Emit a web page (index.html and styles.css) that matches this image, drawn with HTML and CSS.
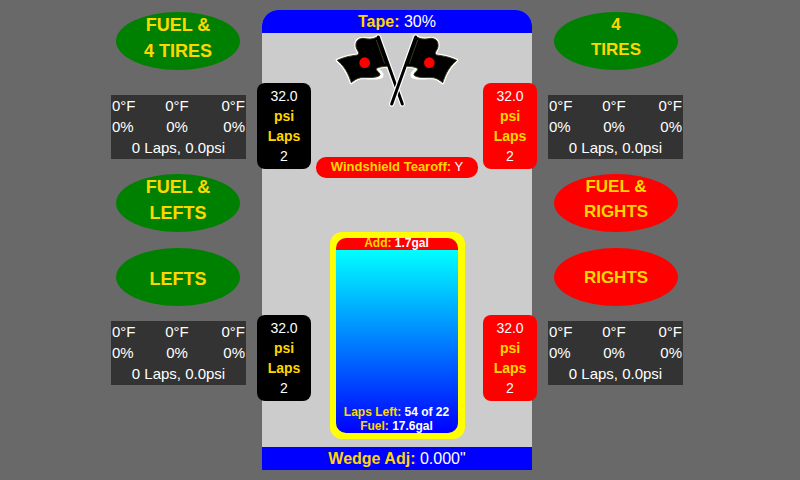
FILE: index.html
```html
<!DOCTYPE html>
<html lang="en">
<head>
<meta charset="utf-8">
<title>Pit Stop</title>
<link rel="stylesheet" href="styles.css">
</head>
<body>
<main class="dash">
  <section class="side left">
    <button class="preset on" type="button"><span>FUEL &amp;</span><span>4 TIRES</span></button>
    <table class="wear">
      <tr><td>0°F</td><td>0°F</td><td>0°F</td></tr>
      <tr><td>0%</td><td>0%</td><td>0%</td></tr>
      <tr><td colspan="3">0 Laps, 0.0psi</td></tr>
    </table>
    <button class="preset on" type="button"><span>FUEL &amp;</span><span>LEFTS</span></button>
    <button class="preset single on" type="button"><span>LEFTS</span></button>
    <table class="wear">
      <tr><td>0°F</td><td>0°F</td><td>0°F</td></tr>
      <tr><td>0%</td><td>0%</td><td>0%</td></tr>
      <tr><td colspan="3">0 Laps, 0.0psi</td></tr>
    </table>
  </section>

  <section class="car">
    <button class="bar front" type="button"><b>Tape:</b> 30%</button>
    <div class="body">
      <div class="tires">
        <button class="tire" type="button"><span>32.0</span><b>psi</b><b>Laps</b><span>2</span></button>
        <button class="tire" type="button"><span>32.0</span><b>psi</b><b>Laps</b><span>2</span></button>
      </div>
      <div class="middle">
        <svg class="flags" viewBox="0 15 402 240" aria-hidden="true">
          <defs>
            <path id="cloth" d="M22 97 C38 89 58 84 82 81 C92 75 80 68 78 56 C76 38 86 31 101 31 C118 35 132 34 144 25 L174 114 C160 116 148 116 140 121 C134 127 151 133 150 141 C142 151 112 148 92 149 C80 151 71 158 64 164 C58 147 50 121 22 97 Z"/>
          </defs>
          <g id="flag">
            <use href="#cloth" class="halo"/>
            <path d="M137 122 C148 128 160 138 154 146 C148 152 130 150 110 149" class="halo"/>
            <path d="M145 27 L217 228" class="pole-halo"/>
            <use href="#cloth" class="cloth"/>
            <path d="M145 27 L217 228" class="pole"/>
            <path d="M139 36 L164 107" class="seam"/>
            <circle cx="104" cy="104" r="16" class="dot"/>
          </g>
          <use href="#flag" transform="matrix(-1 0 0 1 402 0)"/>
        </svg>
        <button class="tearoff" type="button"><b>Windshield Tearoff:</b> Y</button>
        <button class="fuel" type="button">
          <span class="tank">
            <span class="add"><b>Add:</b> 1.7gal</span>
            <span class="level">
              <span><b>Laps Left:</b> 54 of 22</span>
              <span><b>Fuel:</b> 17.6gal</span>
            </span>
          </span>
        </button>
      </div>
      <div class="tires">
        <button class="tire off" type="button"><span>32.0</span><b>psi</b><b>Laps</b><span>2</span></button>
        <button class="tire off" type="button"><span>32.0</span><b>psi</b><b>Laps</b><span>2</span></button>
      </div>
    </div>
    <button class="bar" type="button"><b>Wedge Adj:</b> 0.000"</button>
  </section>

  <section class="side right">
    <button class="preset on" type="button"><span>4</span><span>TIRES</span></button>
    <table class="wear">
      <tr><td>0°F</td><td>0°F</td><td>0°F</td></tr>
      <tr><td>0%</td><td>0%</td><td>0%</td></tr>
      <tr><td colspan="3">0 Laps, 0.0psi</td></tr>
    </table>
    <button class="preset" type="button"><span>FUEL &amp;</span><span>RIGHTS</span></button>
    <button class="preset single" type="button"><span>RIGHTS</span></button>
    <table class="wear">
      <tr><td>0°F</td><td>0°F</td><td>0°F</td></tr>
      <tr><td>0%</td><td>0%</td><td>0%</td></tr>
      <tr><td colspan="3">0 Laps, 0.0psi</td></tr>
    </table>
  </section>
</main>
</body>
</html>
```
FILE: styles.css
```css
* { box-sizing: border-box; }

body {
  margin: 0;
  background: #696969;
  color: #fff;
  font-family: "Liberation Sans", Arial, sans-serif;
}

button {
  margin: 0;
  padding: 0;
  border: 0;
  background: none;
  color: inherit;
  font: inherit;
  cursor: pointer;
}

b { color: gold; }

.dash {
  display: flex;
  justify-content: center;
  align-items: flex-start;
  gap: 16px;
  padding: 10px 6px 10px 0;
}

.side {
  display: flex;
  flex-direction: column;
  width: 135px;
  padding-top: 2px;
}

/* Pit stop presets */
.preset {
  display: flex;
  flex-direction: column;
  align-items: center;
  justify-content: flex-start;
  width: 124px;
  height: 58px;
  margin-left: 5px;
  border-radius: 50%;
  background: red;
  color: gold;
  font-weight: bold;
  font-size: 18px;
  line-height: 26px;
}

.right .preset {
  margin-left: 6px;
  font-size: 17px;
  line-height: 25px;
}

.preset.on { background: green; }

.single {
  margin-top: 16px;
  padding-top: 18px;
}

.right .single { padding-top: 17px; }

/* Tire wear tables */
.wear {
  width: 100%;
  margin: 15px 0;
  border-collapse: collapse;
  table-layout: fixed;
  background: #333;
  font-size: 15px;
  line-height: 21px;
}

.preset:first-child + .wear { margin-top: 25px; }

.wear td {
  padding: 0 1px;
  text-align: center;
}

.wear tr:last-child td { padding-bottom: 1px; }
.wear td:first-child:not([colspan]) { width: 43px; text-align: left; }
.wear td:last-child:not([colspan]) { text-align: right; }

/* Car */
.car {
  display: flex;
  flex-direction: column;
  width: 270px;
  border-radius: 16px 16px 0 0;
  background: #ccc;
}

.bar {
  height: 23px;
  background: blue;
  font-size: 16px;
  line-height: 23px;
}

.front { border-radius: 16px 16px 0 0; }

.body {
  display: flex;
  justify-content: space-between;
  margin: 0 -5px;
}

.tires {
  display: flex;
  flex-direction: column;
  gap: 146px;
  padding-top: 50px;
}

.tire {
  display: flex;
  flex-direction: column;
  align-items: center;
  width: 54px;
  padding: 3px 0;
  border-radius: 8px;
  background: #000;
  font-size: 14px;
  line-height: 20px;
}

.tire.off { background: red; }

.middle {
  display: flex;
  flex: 1;
  flex-direction: column;
  align-items: center;
}

.flags {
  width: 134px;
  height: 80px;
}

.halo { fill: #fff; stroke: #fff; stroke-width: 10; stroke-linejoin: round; }
.cloth { fill: #000; stroke: #3c3c1c; stroke-width: 3; stroke-linejoin: round; }
.pole-halo { stroke: #fff; stroke-width: 16; stroke-linecap: round; }
.pole { stroke: #000; stroke-width: 9; stroke-linecap: round; }
.seam { stroke: #5a5a2c; stroke-width: 2; }
.dot { fill: red; }

.tearoff {
  height: 21px;
  width: 162px;
  margin-top: 44px;
  padding-bottom: 2px;
  border-radius: 10px;
  background: red;
  font-size: 13px;
  line-height: 19px;
}

/* Fuel tank */
.fuel {
  width: 135px;
  margin: 54px 0 8px;
  padding: 6px 7px 6px 6px;
  border-radius: 12px;
  background: yellow;
  font-size: 12px;
  font-weight: bold;
}

.tank {
  display: flex;
  flex-direction: column;
  height: 195px;
}

.add {
  height: 12px;
  border-radius: 10px 10px 0 0;
  background: red;
  line-height: 11px;
}

.level {
  display: flex;
  flex: 1;
  flex-direction: column;
  justify-content: flex-end;
  border-radius: 0 0 10px 10px;
  background: linear-gradient(cyan, blue);
  line-height: 14px;
}
```
